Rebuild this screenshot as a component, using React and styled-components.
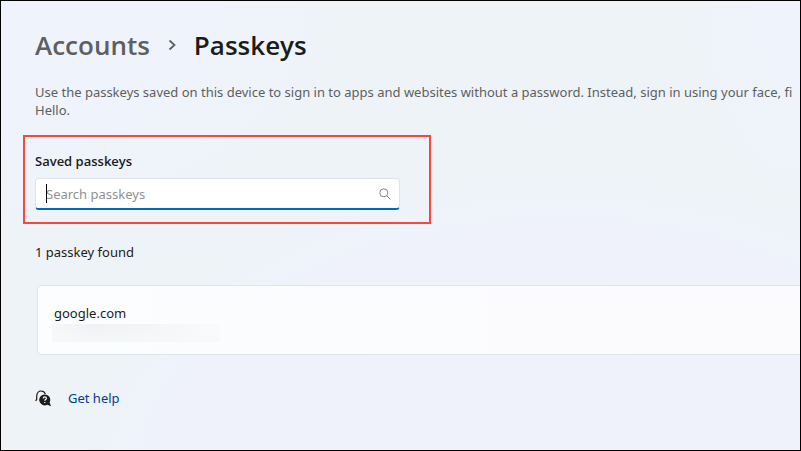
import React, { useState } from "react";
import styled, { createGlobalStyle } from "styled-components";

const App = () => {
  const [search, setSearch] = useState("");

  return (
    <>
      <GlobalStyle />
      <Page>
        <Breadcrumb aria-label="Breadcrumb">
          <ParentLink href="#accounts">Accounts</ParentLink>
          <Chevron viewBox="0 0 8 12" aria-hidden="true">
            <path d="M1.500 1.500 6.500 6l-5 4.500" />
          </Chevron>
          <Title>Passkeys</Title>
        </Breadcrumb>
        <Description>
          Use the passkeys saved on this device to sign in to apps and websites
          without a password. Instead, sign in using your face, fi
          <br />
          Hello.
        </Description>
        <SearchPanel>
          <Label htmlFor="search">Saved passkeys</Label>
          <SearchField>
            <SearchInput
              id="search"
              type="text"
              placeholder="Search passkeys"
              value={search}
              onChange={(e) => setSearch(e.target.value)}
            />
            {search === "" && <Caret />}
            <SearchIcon viewBox="0 0 12 12" aria-hidden="true">
              <circle cx="4.800" cy="4.800" r="4" />
              <path d="M7.700 7.700 11.300 11.300" />
            </SearchIcon>
          </SearchField>
        </SearchPanel>
        <Count>1 passkey found</Count>
        <PasskeyList>
          <PasskeyCard>
            <Site>google.com</Site>
            <HiddenUser />
          </PasskeyCard>
        </PasskeyList>
        <Help>
          <HelpIcon viewBox="0 0 17 17" aria-hidden="true">
            <path
              className="outline"
              d="M.6 10.800 1.700 9.500V6C2 3 3.600 1 6 1c2.200 0 3.700 1 4.300 3"
            />
            <path d="M9.800 4.400a5.500 5.500 0 1 0 2.600 10.300l3.700 1.600-1.500-3.800A5.500 5.500 0 0 0 9.800 4.400Z" />
            <path
              className="question"
              d="M8.200 8.400c0-2.200 3.200-2 3.200-.2 0 1.300-1.600 1.300-1.600 2.500M9.800 12v1"
            />
          </HelpIcon>
          <HelpLink href="#help">Get help</HelpLink>
        </Help>
      </Page>
    </>
  );
};

export default App;

const GlobalStyle = createGlobalStyle`
  * {
    box-sizing: border-box;
  }

  body {
    margin: 0;
    font-family: "Segoe UI", "Noto Sans", "Open Sans", sans-serif;
    font-size: 13px;
    line-height: 18px;
    color: #1b1b1b;
  }
`;

const Page = styled.main`
  min-height: 100vh;
  padding: 27px 0 28px 22px;
  border: 1px solid #000;
  overflow: hidden;
  background:
    radial-gradient(ellipse 60% 66% at 70% 106%, #eff2fb 85%, transparent),
    radial-gradient(ellipse 45% 55% at 0% 0%, #eff3fc 50%, transparent),
    radial-gradient(ellipse 15% 50% at 100% 0%, #eff3fc 20%, transparent),
    #eef3f8;
`;

const Breadcrumb = styled.nav`
  display: flex;
  align-items: center;
  gap: 18px;
  padding-left: 12px;
  font-family: "Segoe UI", "Open Sans", "Noto Sans", sans-serif;
  font-size: 26px;
  font-weight: 600;
  line-height: 34px;
`;

const ParentLink = styled.a`
  color: #5d5f61;
  text-decoration: none;
`;

const Chevron = styled.svg`
  width: 8px;
  height: 12px;
  fill: none;
  stroke: #5d5f61;
  stroke-width: 1.8;
`;

const Title = styled.h1`
  margin: 0;
  font-size: inherit;
  font-weight: inherit;
`;

const Description = styled.p`
  margin: 21px 0 0;
  padding-left: 12px;
  color: #5d5f61;
  white-space: nowrap;
`;

const SearchPanel = styled.section`
  width: 408px;
  max-width: 100%;
  margin-top: 16px;
  padding: 15px 29px 12px 10px;
  border: 2px solid #f9473b;
`;

const Label = styled.label`
  display: block;
  font-family: "Segoe UI", "Open Sans", "Noto Sans", sans-serif;
  font-weight: 600;
`;

const SearchField = styled.div`
  position: relative;
  margin-top: 8px;
`;

const SearchInput = styled.input`
  display: block;
  width: 100%;
  height: 32px;
  padding: 0 32px 0 10px;
  border: 1px solid #e0e4e8;
  border-bottom: 2px solid #0067c0;
  border-radius: 4px;
  outline: none;
  background: #fff;
  color: #1b1b1b;
  font: inherit;

  &::placeholder {
    color: #909090;
    opacity: 1;
  }
`;

const Caret = styled.span`
  position: absolute;
  top: 6px;
  left: 11px;
  width: 1px;
  height: 19px;
  background: #000;
  pointer-events: none;
`;

const SearchIcon = styled.svg`
  position: absolute;
  top: 10px;
  right: 9px;
  width: 12px;
  height: 12px;
  fill: none;
  stroke: #858585;
  pointer-events: none;
`;

const Count = styled.p`
  margin: 19px 0 0;
  padding-left: 12px;
`;

const PasskeyList = styled.ul`
  margin: 24px 0 0;
  padding: 0 0 0 14px;
  list-style: none;
`;

const PasskeyCard = styled.li`
  min-height: 70px;
  padding: 18px 0 12px 14px;
  border: 1px solid #dfe4ea;
  border-right: none;
  border-radius: 5px 0 0 5px;
  background: linear-gradient(90deg, #fbfdfe, #fbfbfe);
`;

const Site = styled.div`
  padding-left: 2px;
`;

const HiddenUser = styled.div`
  width: 168px;
  height: 18px;
  margin-top: 2px;
  background:
    linear-gradient(transparent, rgba(246, 249, 250, 0.8)),
    linear-gradient(90deg, #f6f7f8, #eff1f2 25%, #f3f5f6 60%, #fafbfc);
`;

const Help = styled.footer`
  display: flex;
  align-items: center;
  gap: 16px;
  margin-top: 34px;
  padding-left: 12px;
`;

const HelpIcon = styled.svg`
  width: 17px;
  height: 17px;
  fill: #1b1b1b;

  .outline,
  .question {
    fill: none;
    stroke: #1b1b1b;
    stroke-width: 1.2;
  }

  .question {
    stroke: #fff;
  }
`;

const HelpLink = styled.a`
  color: #003e92;
  text-decoration: none;
`;
